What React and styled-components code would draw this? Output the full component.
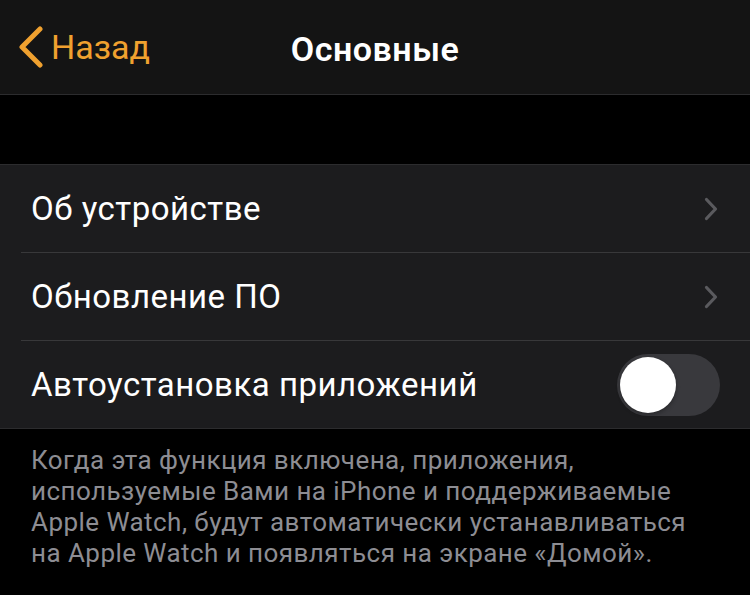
import React from "react";
import styled, { createGlobalStyle } from "styled-components";

const Global = createGlobalStyle`
  html, body { margin: 0; padding: 0; background: #000; }
  body { font-family: Roboto, "Noto Sans", sans-serif; -webkit-font-smoothing: antialiased; }
`;

const Screen = styled.div`
  width: 750px;
  height: 595px;
  background: #000;
  overflow: hidden;
  display: flex;
  flex-direction: column;
`;

const NavBar = styled.header`
  height: 94px;
  background: #141414;
  border-bottom: 1px solid #2c2c2e;
  display: grid;
  grid-template-columns: 1fr auto 1fr;
  align-items: center;
  padding: 0 18px;
`;

const BackButton = styled.button`
  justify-self: start;
  display: flex;
  align-items: center;
  gap: 7px;
  background: none;
  border: 0;
  padding: 0;
  color: #f0a12f;
  font: 400 34px Roboto, sans-serif;
  letter-spacing: 0;
  cursor: pointer;
`;

const Title = styled.h1`
  margin: 0 0 -3px;
  color: #fff;
  font: 600 34px Roboto, sans-serif;
  letter-spacing: 0.5px;
`;

const Spacer = styled.div`
  height: 69px;
  background: #000;
`;

const Group = styled.section`
  background: #1c1c1e;
  border-top: 1px solid #2c2c2e;
  border-bottom: 1px solid #2c2c2e;
`;

const Row = styled.div`
  height: 87px;
  display: flex;
  align-items: center;
  padding-left: 31px;
  padding-right: ${(p) => (p.$toggle ? "30px" : "32px")};
  & + & { border-top: 1px solid #38383a; margin-left: 21px; padding-left: 10px; }
`;

const Label = styled.span`
  flex: 1;
  color: #fff;
  font: 400 33px Roboto, sans-serif;
  letter-spacing: 0.5px;
`;

const Toggle = styled.div`
  width: 103px;
  height: 62px;
  border-radius: 31px;
  background: #39393d;
  display: flex;
  align-items: center;
  padding: 3px;
  box-sizing: border-box;
`;

const Knob = styled.div`
  width: 56px;
  height: 56px;
  border-radius: 50%;
  background: #fff;
  box-shadow: 0 2px 4px rgba(0, 0, 0, 0.3);
`;

const Footnote = styled.p`
  margin: 0;
  padding: 16px 31px 0;
  color: #8d8d93;
  font: 400 26px/31px Roboto, sans-serif;
  letter-spacing: 0.45px;
  white-space: nowrap;
`;

const Chevron = () => (
  <svg width="14" height="24" viewBox="0 0 14 24">
    <path d="M2.5 2.5 L11.5 12 L2.5 21.5" fill="none" stroke="#5a5a5e" strokeWidth="3.2" strokeLinecap="round" strokeLinejoin="round" />
  </svg>
);

const BackArrow = () => (
  <svg width="26" height="42" viewBox="0 0 26 42">
    <path d="M22 3 L4 21 L22 39" fill="none" stroke="#f0a12f" strokeWidth="5" strokeLinecap="round" strokeLinejoin="round" />
  </svg>
);

export default function App() {
  return (
    <>
      <Global />
      <Screen>
        <NavBar>
          <BackButton>
            <BackArrow />
            Назад
          </BackButton>
          <Title>Основные</Title>
          <div />
        </NavBar>
        <Spacer />
        <Group>
          <Row>
            <Label>Об устройстве</Label>
            <Chevron />
          </Row>
          <Row>
            <Label>Обновление ПО</Label>
            <Chevron />
          </Row>
          <Row $toggle>
            <Label>Автоустановка приложений</Label>
            <Toggle>
              <Knob />
            </Toggle>
          </Row>
        </Group>
        <Footnote>
          Когда эта функция включена, приложения,
          <br />
          используемые Вами на iPhone и поддерживаемые
          <br />
          Apple Watch, будут автоматически устанавливаться
          <br />
          на Apple Watch и появляться на экране «Домой».
        </Footnote>
      </Screen>
    </>
  );
}
